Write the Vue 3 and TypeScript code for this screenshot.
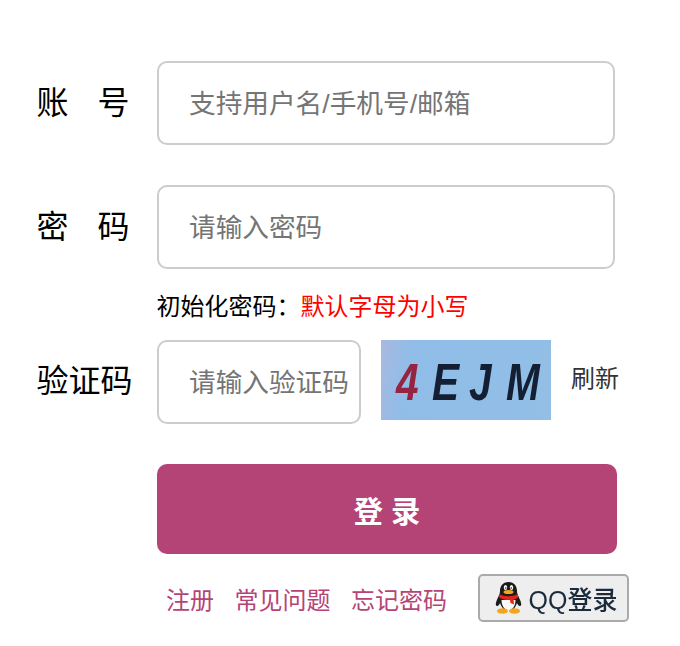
<script setup lang="ts">
const links = ['注册', '常见问题', '忘记密码']
</script>

<template>
  <div class="page">
    <div class="row">
      <label class="label">账<span class="gap"></span>号</label>
      <input class="field" placeholder="支持用户名/手机号/邮箱" />
    </div>
    <div class="row second">
      <label class="label">密<span class="gap"></span>码</label>
      <input class="field" placeholder="请输入密码" />
    </div>
    <div class="hint">初始化密码：<span class="red">默认字母为小写</span></div>
    <div class="row third">
      <label class="label">验证码</label>
      <input class="field small" placeholder="请输入验证码" />
      <div class="captcha">
        <span class="ch c1">4</span><span class="ch">E</span><span class="ch">J</span><span class="ch">M</span>
      </div>
      <a class="refresh">刷新</a>
    </div>
    <button class="submit">登 录</button>
    <div class="links">
      <a v-for="l in links" :key="l" class="link">{{ l }}</a>
      <div class="qq">
        <svg class="penguin" width="33" height="34" viewBox="0 0 32 34">
          <path d="M16 1C10 1 7.500 5.500 7.500 10C7.500 13 6 15 4 20C3 23 3 25 4.500 25C6 25 7 23 7.500 22C8.500 25 10 27 11 28H21C22 27 23.500 25 24.500 22C25 23 26 25 27.500 25C29 25 29 23 28 20C26 15 24.500 13 24.500 10C24.500 5.500 22 1 16 1Z" fill="#1b1b1b" />
          <path d="M9 19C9 25 12 29 16 29C20 29 23 25 23 19Z" fill="#fafafa" />
          <path d="M7 13C11 16 21 16 25 13L26 16C24 18 22 18.500 21 18.500L21.500 23.500L18 22L17.500 18.800C13 19.500 8.500 18 6.500 16Z" fill="#e0261c" />
          <ellipse cx="16" cy="11" rx="5" ry="2" fill="#f4a51c" />
          <ellipse cx="13" cy="6.500" rx="1.700" ry="2.500" fill="#fff" />
          <ellipse cx="19" cy="6.500" rx="1.700" ry="2.500" fill="#fff" />
          <circle cx="13.300" cy="7" r=".8" fill="#111" />
          <circle cx="18.700" cy="7" r=".8" fill="#111" />
          <ellipse cx="10" cy="30" rx="5.500" ry="2.800" fill="#f4a51c" />
          <ellipse cx="22" cy="30" rx="5.500" ry="2.800" fill="#f4a51c" />
        </svg>
        <span class="qq-text">QQ登录</span>
      </div>
    </div>
  </div>
</template>

<style scoped>
.page {
  width: 680px;
  height: 646px;
  box-sizing: border-box;
  padding: 61px 0 0 36.500px;
  font-family: "Liberation Sans", "Noto Sans CJK SC", sans-serif;
  color: #000;
  overflow: hidden;
}
.row { display: flex; align-items: center; }
.second { margin-top: 40px; }
.third { margin-top: 15px; }
.label { width: 120.500px; font-size: 32px; line-height: 40px; display: flex; flex: none; }
.gap { width: 29px; }
.third .label { position: relative; top: -1px; }
.field {
  width: 458px;
  height: 84px;
  box-sizing: border-box;
  border: 2px solid #ccc;
  border-radius: 10px;
  padding: 2px 30px 0;
  font-size: 26.670px;
  font-family: inherit;
  background: #fff;
  outline: none;
}
.field::placeholder { color: #757575; opacity: 1; }
.small { width: 204px; padding-right: 0; }
.hint { margin: 20px 0 0 120px; font-size: 24px; line-height: 36px; }
.red { color: #f00; }
.captcha {
  width: 170px;
  height: 80px;
  margin: -4px 0 0 20px;
  background: linear-gradient(100deg, #a9b9e0 0, #8fbde8 18%, #93bfe6 100%);
  display: flex;
  align-items: center;
  padding: 4px 0 0 15px;
  box-sizing: border-box;
  font: italic 700 52px/1 "Liberation Sans", sans-serif;
  color: #141f33;
  filter: blur(.7px);
}
.ch { display: block; width: 37px; transform: scaleX(.78); transform-origin: left center; }
.c1 { color: #962440; width: 36px; }
.refresh { margin: -12px 0 0 20px; font-size: 24px; color: #333; }
.submit {
  display: block;
  width: 460px;
  height: 90px;
  margin: 40px 0 0 120.500px;
  border: 0;
  border-radius: 10px;
  background: #b54476;
  color: #fff;
  font-family: inherit;
  font-size: 29.330px;
  font-weight: 700;
}
.links { display: flex; align-items: center; margin: 20px 0 0 129.500px; height: 48px; }
.link { font-size: 24px; color: #b54476; margin-right: 20.500px; }
.qq {
  margin-left: 10px;
  width: 151px;
  height: 48px;
  box-sizing: border-box;
  border: 2px solid #aaa;
  border-radius: 5px;
  background: #eee;
  display: flex;
  align-items: center;
  padding-left: 12px;
  gap: 4px;
  font-size: 25px;
  font-weight: 500;
  color: #1c2b3c;
}
.penguin { flex: none; filter: blur(.4px); }
.qq-text { filter: blur(.4px); }
</style>
